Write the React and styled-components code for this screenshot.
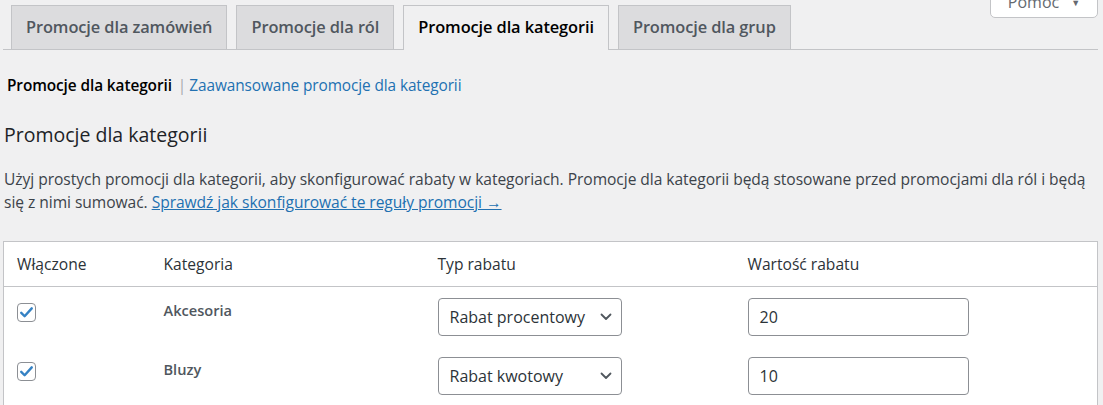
import React from 'react';
import styled, { createGlobalStyle } from 'styled-components';

const GlobalStyle = createGlobalStyle`
  html, body {
    margin: 0;
    padding: 0;
    background: #f0f0f1;
  }
  body {
    font-family: "Open Sans", "Noto Sans", sans-serif;
    color: #3c434a;
    overflow: hidden;
  }
`;

const Page = styled.div`
  position: relative;
  padding: 5px 5px 0 3px;
`;

const HelpTab = styled.button`
  position: absolute;
  top: -20px;
  right: 5px;
  width: 108px;
  height: 38px;
  background: #fff;
  border: 1px solid #c3c4c7;
  border-radius: 0 0 5px 5px;
  font-family: inherit;
  font-size: 16px;
  color: #646970;
  padding: 6px 0 0;
  display: flex;
  align-items: center;
  justify-content: center;
  gap: 12px;
`;

const Caret = styled.span`
  font-size: 9px;
`;

const TabBar = styled.nav`
  display: flex;
  border-bottom: 1px solid #c3c4c7;
  padding-left: 8px;
  gap: 9px;
`;

const Tab = styled.a`
  display: block;
  box-sizing: border-box;
  padding: 0 14px;
  line-height: 41px;
  font-size: 16.4px;
  font-weight: 600;
  text-decoration: none;
  white-space: nowrap;
  border: 1px solid #c3c4c7;
  border-bottom: none;
  margin-bottom: ${p => (p.$active ? '-1px' : '0')};
  height: ${p => (p.$active ? '45px' : '44px')};
  background: ${p => (p.$active ? '#f0f0f1' : '#dcdcde')};
  color: ${p => (p.$active ? '#000' : '#50575e')};
  letter-spacing: -0.1px;
`;

const SubNav = styled.ul`
  list-style: none;
  margin: 25px 0 0 4px;
  padding: 0;
  display: flex;
  align-items: baseline;
  font-size: 15.4px;
  line-height: 22px;
`;

const SubItem = styled.li`
  color: ${p => (p.$current ? '#000' : '#2271b1')};
  font-weight: ${p => (p.$current ? 600 : 400)};
  letter-spacing: -0.1px;
`;

const Sep = styled.span`
  color: #a7aaad;
  margin: 0 3px 0 6px;
`;

const Title = styled.h2`
  margin: 25px 0 0 1px;
  font-size: 19.5px;
  font-weight: 500;
  color: #1d2327;
  line-height: 26px;
`;

const Intro = styled.p`
  margin: 20px 0 0 1px;
  width: 1090px;
  font-size: 15.6px;
  line-height: 23px;
  color: #3c434a;
  letter-spacing: -0.05px;
`;

const Link = styled.a`
  color: #2271b1;
  text-decoration: underline;
`;

const Table = styled.table`
  margin-top: 27px;
  width: 1095px;
  border-collapse: collapse;
  background: #fff;
  border: 1px solid #c3c4c7;
  table-layout: fixed;
`;

const Th = styled.th`
  width: ${p => p.$w}px;
  text-align: left;
  font-weight: 400;
  font-size: 15.6px;
  color: #2c3338;
  padding: 11px 13px 10px;
  line-height: 23px;
  border-bottom: 1px solid #c3c4c7;
  box-sizing: border-box;
`;

const Td = styled.td`
  padding: 10px 13px 10px;
  vertical-align: top;
  font-size: 15px;
`;

const CatName = styled.strong`
  display: block;
  padding-top: 3px;
  font-weight: 600;
  color: #50575e;
  font-size: 14.6px;
`;

const Box = styled.span`
  display: flex;
  width: 19px;
  height: 19px;
  margin-top: 6px;
  box-sizing: border-box;
  border: 1px solid #8c8f94;
  border-radius: 4px;
  background: #fff;
  align-items: center;
  justify-content: center;
`;

const SelectBox = styled.div`
  display: flex;
  align-items: center;
  justify-content: space-between;
  width: 184px;
  height: 38px;
  margin-top: 1px;
  box-sizing: border-box;
  border: 1px solid #8c8f94;
  border-radius: 4px;
  padding: 0 9px 0 11px;
  font-size: 16px;
  color: #2c3338;
  background: #fff;
`;

const TextInput = styled.div`
  width: 221px;
  height: 38px;
  margin-top: 1px;
  box-sizing: border-box;
  border: 1px solid #8c8f94;
  border-radius: 4px;
  padding: 0 11px;
  font-size: 16px;
  line-height: 36px;
  color: #2c3338;
  background: #fff;
`;

const Check = () => (
  <Box>
    <svg width="15" height="15" viewBox="0 0 20 20">
      <path d="M3 10.5l4.5 4.5L17 4.5" fill="none" stroke="#3582c4" strokeWidth="3.2" strokeLinecap="round" strokeLinejoin="round" />
    </svg>
  </Box>
);

const Chevron = () => (
  <svg width="12" height="8" viewBox="0 0 12 8">
    <path d="M1.5 1.5L6 6l4.5-4.5" fill="none" stroke="#50575e" strokeWidth="1.8" strokeLinecap="round" strokeLinejoin="round" />
  </svg>
);

const rows = [
  { name: 'Akcesoria', type: 'Rabat procentowy', value: '20' },
  { name: 'Bluzy', type: 'Rabat kwotowy', value: '10' },
];

export default function App() {
  return (
    <>
      <GlobalStyle />
      <Page>
        <HelpTab>
          Pomoc <Caret>▼</Caret>
        </HelpTab>
        <TabBar>
          <Tab>Promocje dla zamówień</Tab>
          <Tab>Promocje dla ról</Tab>
          <Tab $active>Promocje dla kategorii</Tab>
          <Tab>Promocje dla grup</Tab>
        </TabBar>

        <SubNav>
          <SubItem $current>Promocje dla kategorii</SubItem>
          <Sep>|</Sep>
          <SubItem>Zaawansowane promocje dla kategorii</SubItem>
        </SubNav>

        <Title>Promocje dla kategorii</Title>
        <Intro>
          Użyj prostych promocji dla kategorii, aby skonfigurować rabaty w kategoriach. Promocje dla kategorii będą
          stosowane przed promocjami dla ról i będą się z nimi sumować.{' '}
          <Link>Sprawdź jak skonfigurować te reguły promocji →</Link>
        </Intro>

        <Table>
          <thead>
            <tr>
              <Th $w={147}>Włączone</Th>
              <Th $w={274}>Kategoria</Th>
              <Th $w={310}>Typ rabatu</Th>
              <Th>Wartość rabatu</Th>
            </tr>
          </thead>
          <tbody>
            {rows.map(r => (
              <tr key={r.name}>
                <Td><Check /></Td>
                <Td><CatName>{r.name}</CatName></Td>
                <Td>
                  <SelectBox>
                    <span>{r.type}</span>
                    <Chevron />
                  </SelectBox>
                </Td>
                <Td><TextInput>{r.value}</TextInput></Td>
              </tr>
            ))}
          </tbody>
        </Table>
      </Page>
    </>
  );
}
